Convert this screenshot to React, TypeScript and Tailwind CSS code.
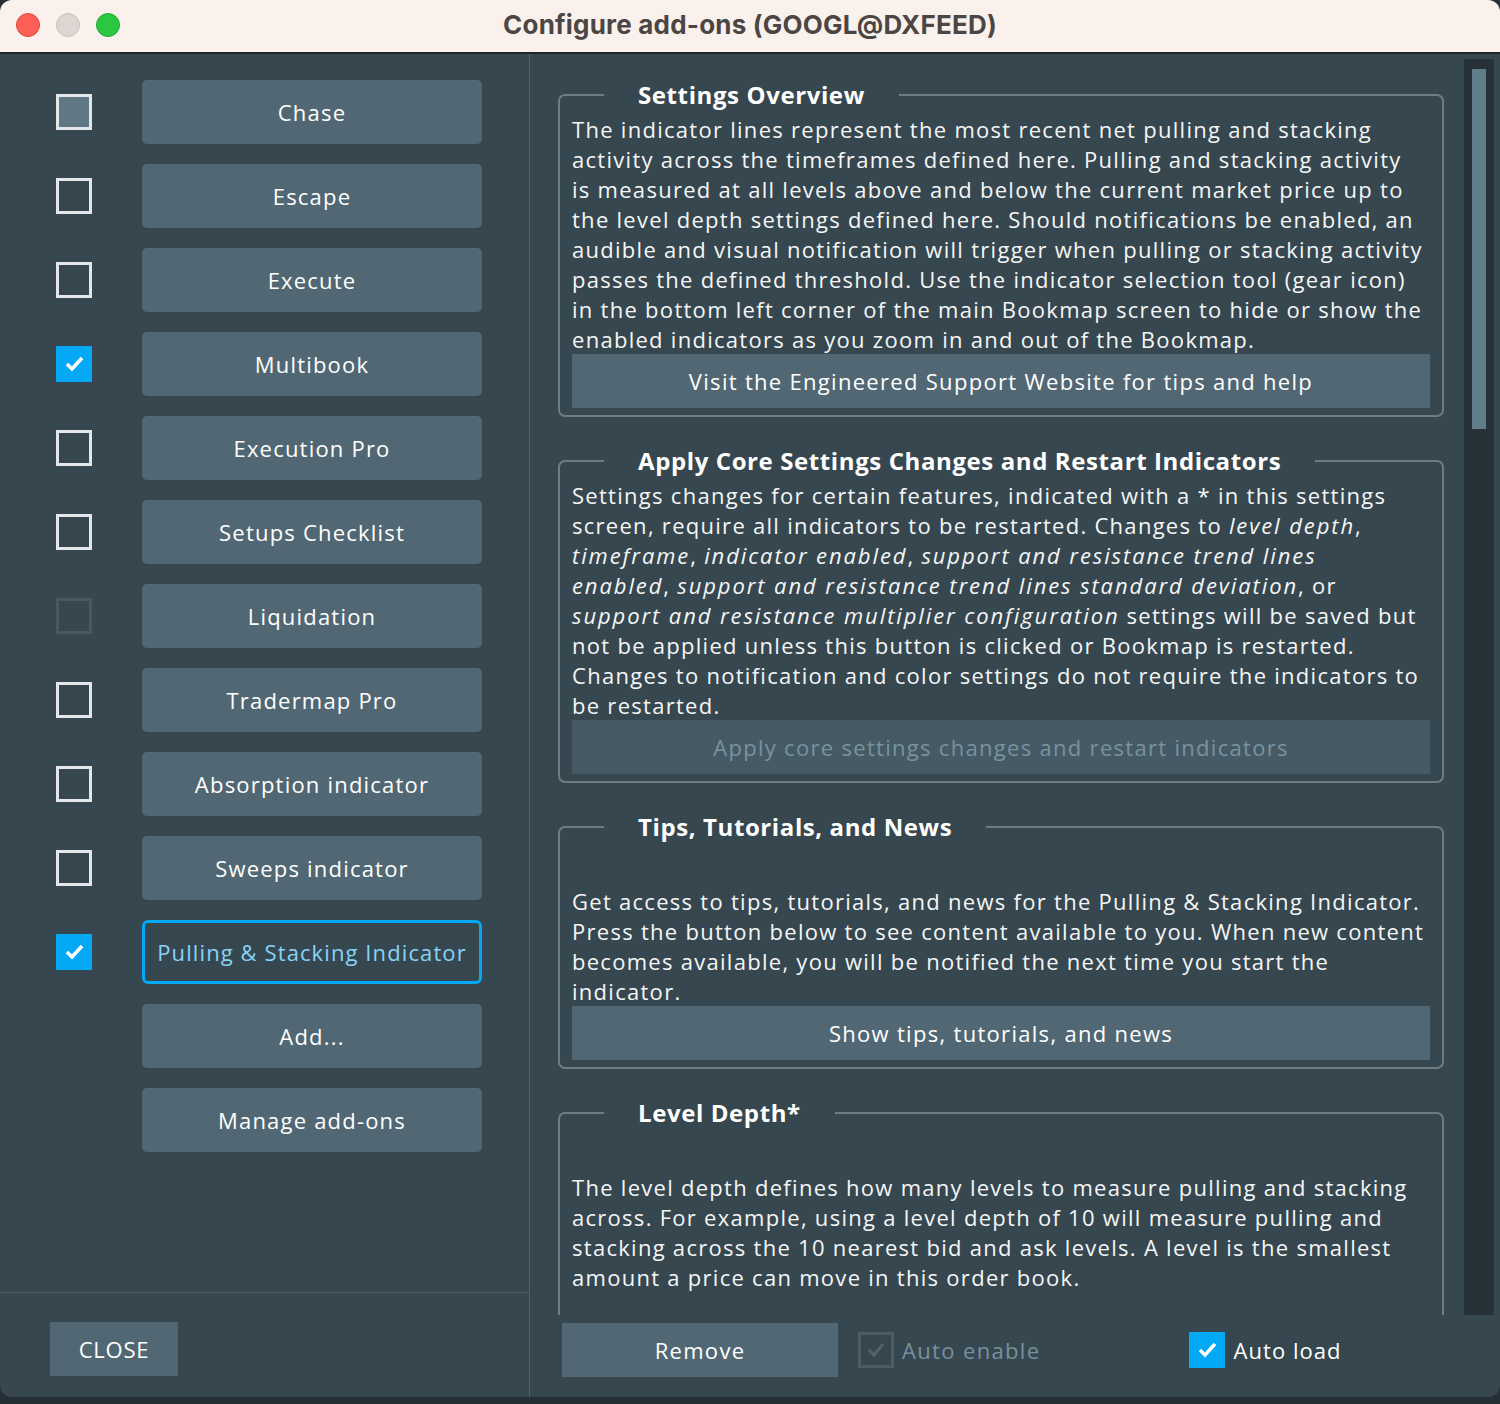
import type { ReactNode } from "react";

const FONT = { fontFamily: '"Open Sans", "DejaVu Sans", sans-serif' };

const ADDONS = [
	{ name: "Chase", state: "hover" },
	{ name: "Escape", state: "off" },
	{ name: "Execute", state: "off" },
	{ name: "Multibook", state: "on" },
	{ name: "Execution Pro", state: "off" },
	{ name: "Setups Checklist", state: "off" },
	{ name: "Liquidation", state: "disabled" },
	{ name: "Tradermap Pro", state: "off" },
	{ name: "Absorption indicator", state: "off" },
	{ name: "Sweeps indicator", state: "off" },
	{ name: "Pulling & Stacking Indicator", state: "on", selected: true },
];

function Check({ state }: { state: string }) {
	if (state === "on") {
		return (
			<div className="w-[36px] h-[36px] bg-[#03a9f4] flex items-center justify-center">
				<svg width="36" height="36" viewBox="0 0 36 36">
					<polyline
						points="11,18 16,23 26,12"
						fill="none"
						stroke="#fff"
						strokeWidth="3.5"
					/>
				</svg>
			</div>
		);
	}
	if (state === "disabled") {
		return <div className="w-[36px] h-[36px] border-[3px] border-[#465861]" />;
	}
	if (state === "hover") {
		return (
			<div className="w-[36px] h-[36px] border-[3px] border-[#e3e7e9] bg-[#607784]" />
		);
	}
	return <div className="w-[36px] h-[36px] border-[3px] border-[#e3e7e9]" />;
}

function Box({
	title,
	children,
}: {
	title: string;
	children: ReactNode;
}) {
	return (
		<fieldset className="border-2 border-[#6b7e88] rounded-[7px] px-[12px] pb-[7px] mb-[29px]">
			<legend className="ml-[32px] px-[34px] text-[24px] font-bold text-white leading-[30px] tracking-[0.6px]">
				{title}
			</legend>
			{children}
		</fieldset>
	);
}

function It({ children }: { children: ReactNode }) {
	return <i className="tracking-[1.9px]">{children}</i>;
}

function Lines({ lines }: { lines: ReactNode[] }) {
	return (
		<div className="text-[22px] leading-[30px] text-[#f4f6f7] tracking-[1.28px]">
			{lines.map((l, i) => (
				<div key={i} className="whitespace-nowrap">
					{l}
				</div>
			))}
		</div>
	);
}

function BoxButton({
	label,
	disabled,
}: {
	label: string;
	disabled?: boolean;
}) {
	return (
		<div
			className={
				disabled
					? "h-[54px] bg-[#455a64] flex items-center justify-center text-[22px] text-[#7a929e] tracking-[1.3px]"
					: "h-[54px] bg-[#516874] flex items-center justify-center text-[22px] text-white tracking-[1.3px]"
			}
		>
			{label}
		</div>
	);
}

export default function App() {
	return (
		<div className="w-[1500px] h-[1404px] bg-[#243036] overflow-hidden" style={FONT}>
			<div className="h-[1397px] bg-[#37474f] rounded-[12px] overflow-hidden flex flex-col">
				{/* title bar */}
				<div className="h-[54px] shrink-0 bg-[#fbf1ec] border-b-2 border-[#1c262b] relative flex items-center justify-center">
					<div className="absolute left-[16px] top-[13px] flex gap-[16px]">
						<div className="w-[24px] h-[24px] rounded-full bg-[#fe5f57] border border-[#e2463f]" />
						<div className="w-[24px] h-[24px] rounded-full bg-[#ddd5d1] border border-[#c9c0bb]" />
						<div className="w-[24px] h-[24px] rounded-full bg-[#2ac840] border border-[#1faa33]" />
					</div>
					<div
						className="text-[26px] font-bold text-[#4b4644] tracking-[0.2px] -mt-[4px]"
						style={{ fontFamily: 'Inter, "Noto Sans", sans-serif' }}
					>
						Configure add-ons (GOOGL@DXFEED)
					</div>
				</div>

				<div className="flex flex-1 min-h-0">
					{/* left panel */}
					<div className="w-[530px] shrink-0 border-r border-[#4e626c] flex flex-col">
						<div className="flex-1 pt-[26px] flex flex-col gap-[20px]">
							{ADDONS.map((a) => (
								<div key={a.name} className="flex items-center h-[64px]">
									<div className="ml-[56px] w-[36px]">
										<Check state={a.state} />
									</div>
									<div
										className={
											a.selected
												? "ml-[50px] w-[340px] h-[64px] rounded-[6px] border-[3px] border-[#03a9f4] flex items-center justify-center text-[22px] text-[#86d3f7] tracking-[1.1px]"
												: "ml-[50px] w-[340px] h-[64px] rounded-[5px] bg-[#516874] flex items-center justify-center text-[22px] text-white tracking-[1.2px]"
										}
									>
										{a.name}
									</div>
								</div>
							))}
							{["Add...", "Manage add-ons"].map((n) => (
								<div key={n} className="flex h-[64px]">
									<div className="ml-[142px] w-[340px] h-[64px] rounded-[5px] bg-[#516874] flex items-center justify-center text-[22px] text-white tracking-[1.2px]">
										{n}
									</div>
								</div>
							))}
						</div>
						<div className="h-[105px] shrink-0 border-t border-[#4e626c] pt-[29px] pl-[50px]">
							<div className="w-[128px] h-[54px] bg-[#516874] flex items-center justify-center text-[22px] text-white tracking-[0.8px]">
								CLOSE
							</div>
						</div>
					</div>

					{/* right panel */}
					<div className="flex-1 flex flex-col min-w-0">
						<div className="flex h-[1261px] shrink-0">
							<div className="flex-1 overflow-hidden pl-[28px] pr-[20px] pt-[26px]">
								<Box title="Settings Overview">
									<div className="mt-[4px]">
										<Lines
											lines={[
												"The indicator lines represent the most recent net pulling and stacking",
												"activity across the timeframes defined here. Pulling and stacking activity",
												"is measured at all levels above and below the current market price up to",
												"the level depth settings defined here. Should notifications be enabled, an",
												"audible and visual notification will trigger when pulling or stacking activity",
												"passes the defined threshold. Use the indicator selection tool (gear icon)",
												"in the bottom left corner of the main Bookmap screen to hide or show the",
												"enabled indicators as you zoom in and out of the Bookmap.",
											]}
										/>
									</div>
									<BoxButton label="Visit the Engineered Support Website for tips and help" />
								</Box>

								<Box title="Apply Core Settings Changes and Restart Indicators">
									<div className="mt-[4px]">
										<Lines
											lines={[
												"Settings changes for certain features, indicated with a * in this settings",
												<>
													screen, require all indicators to be restarted. Changes to{" "}
													<It>level depth</It>,
												</>,
												<>
													<It>timeframe</It>, <It>indicator enabled</It>,{" "}
													<It>support and resistance trend lines</It>
												</>,
												<>
													<It>enabled</It>,{" "}
													<It>support and resistance trend lines standard deviation</It>, or
												</>,
												<>
													<It>support and resistance multiplier configuration</It> settings
													will be saved but
												</>,
												"not be applied unless this button is clicked or Bookmap is restarted.",
												"Changes to notification and color settings do not require the indicators to",
												"be restarted.",
											]}
										/>
									</div>
									<BoxButton
										label="Apply core settings changes and restart indicators"
										disabled
									/>
								</Box>

								<Box title="Tips, Tutorials, and News">
									<div className="h-[44px]" />
									<Lines
										lines={[
											"Get access to tips, tutorials, and news for the Pulling & Stacking Indicator.",
											"Press the button below to see content available to you. When new content",
											"becomes available, you will be notified the next time you start the",
											"indicator.",
										]}
									/>
									<BoxButton label="Show tips, tutorials, and news" />
								</Box>

								<Box title="Level Depth*">
									<div className="h-[44px]" />
									<Lines
										lines={[
											"The level depth defines how many levels to measure pulling and stacking",
											"across. For example, using a level depth of 10 will measure pulling and",
											"stacking across the 10 nearest bid and ask levels. A level is the smallest",
											"amount a price can move in this order book.",
										]}
									/>
									<div className="h-[200px]" />
								</Box>
							</div>
							<div className="w-[30px] shrink-0 mr-[6px] mt-[5px] bg-[#263238] pt-[10px] pl-[8px]">
								<div className="w-[14px] h-[360px] bg-[#607d8b]" />
							</div>
						</div>

						{/* bottom bar */}
						<div className="flex-1 flex items-start pt-[8px] pl-[32px]">
							<div className="w-[276px] h-[54px] bg-[#516874] flex items-center justify-center text-[22px] text-white tracking-[1.3px]">
								Remove
							</div>
							<div className="ml-[20px] mt-[9px] flex items-center">
								<div className="w-[36px] h-[36px] border-[3px] border-[#4a5d67] flex items-center justify-center">
									<svg width="30" height="30" viewBox="0 0 30 30">
										<polyline
											points="8,15 13,20 22,9"
											fill="none"
											stroke="#4f636d"
											strokeWidth="3"
										/>
									</svg>
								</div>
								<span className="ml-[8px] text-[22px] text-[#78909c] tracking-[1.35px]">
									Auto enable
								</span>
							</div>
							<div className="ml-[149px] mt-[9px] flex items-center">
								<Check state="on" />
								<span className="ml-[8px] text-[22px] text-white tracking-[1.05px]">
									Auto load
								</span>
							</div>
						</div>
					</div>
				</div>
			</div>
		</div>
	);
}
